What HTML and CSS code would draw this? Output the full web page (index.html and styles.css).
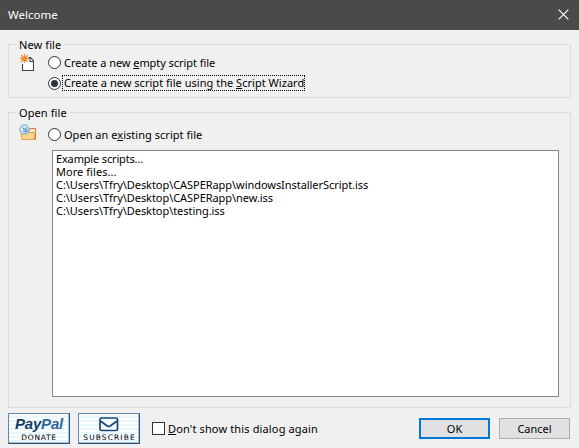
FILE: index.html
```html
<!DOCTYPE html>
<html lang="en">
<head>
<meta charset="utf-8">
<title>Welcome</title>
<link rel="stylesheet" href="styles.css">
</head>
<body>
<header class="titlebar">
  <span class="title">Welcome</span>
  <svg class="close" width="11" height="11" viewBox="0 0 11 11"><path d="M.7.7l9.6 9.6M10.3.7L.7 10.3" stroke="#fff" stroke-width="1.2" fill="none"/></svg>
</header>
<main class="content">
  <fieldset class="group group-new">
    <legend>New file</legend>
    <div class="group-body">
      <svg class="icon" width="18" height="18" viewBox="0 0 18 18">
        <path d="M9 3.500h3.500l3 3v10h-11v-7" fill="#fff"/>
        <path d="M3.500 11v6.500h11v-10l-3-3H9.500M11 4.500v4h3.500" fill="none" stroke="#444" stroke-width="1.100"/>
        <path d="M5.500 1v9M1 5.500h9M2.300 2.300l6.400 6.400M8.700 2.300L2.300 8.700" stroke="#f08a30" stroke-width="1.300"/>
      </svg>
      <div class="options">
        <label class="option"><span class="radio"></span><span class="label w-empty">Create a new <u>e</u>mpty script file</span></label>
        <label class="option"><span class="radio checked"></span><span class="label w-wizard focused">Create a new script file using the <u>S</u>cript Wizard</span></label>
      </div>
    </div>
  </fieldset>
  <fieldset class="group group-open">
    <legend>Open file</legend>
    <div class="group-body">
      <svg class="icon" width="18" height="18" viewBox="0 0 18 18">
        <path d="M3.500 7.500h6l1.500-3h5.500v11h-13z" fill="#f8ead4" stroke="#e2772e"/>
        <path d="M2 8.500h13l.5 7h-12.500z" fill="#f8d78e" stroke="#e9a052"/>
        <circle cx="5.500" cy="5.500" r="4.500" fill="#e5f2fa" stroke="#4a9dcd"/>
        <path d="M3.300 3.300l4 4M7.700 4.500v3.200H4.500M7.500 3.300L3.700 7" fill="none" stroke="#3182bc"/>
      </svg>
      <div class="options">
        <label class="option"><span class="radio"></span><span class="label w-open">Open an e<u>x</u>isting script file</span></label>
      </div>
    </div>
    <ul class="list">
      <li class="l1">Example scripts...</li>
      <li class="l2">More files...</li>
      <li>C:\Users\Tfry\Desktop\CASPERapp\windowsInstallerScript.iss</li>
      <li>C:\Users\Tfry\Desktop\CASPERapp\new.iss</li>
      <li>C:\Users\Tfry\Desktop\testing.iss</li>
    </ul>
  </fieldset>
</main>
<footer class="footer">
  <div class="badge">
    <span class="paypal">Pay<span class="pal">Pal</span></span>
    <span class="badge-text donate">DONATE</span>
  </div>
  <div class="badge">
    <svg class="mail" width="20" height="15" viewBox="0 0 20 15"><rect x="1" y="1" width="17.500" height="12.500" rx="1.500" fill="#f8fcff" stroke="#164779" stroke-width="1.700"/><path d="M1.500 4l6.700 5q1.500 1 3 0l6.800-5" fill="none" stroke="#164779" stroke-width="1.700"/></svg>
    <span class="badge-text subscribe">SUBSCRIBE</span>
  </div>
  <label class="again"><span class="checkbox"></span><span class="w-again"><u>D</u>on't show this dialog again</span></label>
  <div class="buttons">
    <button class="btn default">OK</button>
    <button class="btn cancel">Cancel</button>
  </div>
</footer>
</body>
</html>
```
FILE: styles.css
```css
* { box-sizing: border-box; }
body {
  margin: 0; width: 579px; height: 448px; overflow: hidden;
  display: flex; flex-direction: column;
  background: #f0f0f0; color: #000;
  font: 11px/13px "Noto Sans", "Open Sans", sans-serif;
}
.titlebar {
  height: 30px; flex: none; padding: 0 10px 0 8px;
  display: flex; align-items: center; justify-content: space-between;
  background: #4c4a48; color: #fff;
}
.title { font-size: 11.500px; margin-top: -2px; }
.close { margin-top: -2px; }
.content { flex: none; padding: 8px 8px 0; display: flex; flex-direction: column; gap: 8px; }
.group { margin: 0; padding: 0; border: 1px solid #dcdcdc; min-width: 0; }
.group-new { height: 60px; }
.group-open { height: 302px; }
legend { margin-left: 7px; padding: 0 3px; height: 13px; white-space: nowrap; letter-spacing: .1px; }
.group-body { display: flex; padding: 2px 0 0 10px; }
.group-open .group-body { padding-top: 5px; height: 31px; }
.icon { flex: none; margin-right: 11px; }
.options { display: flex; flex-direction: column; }
.option { height: 20px; display: flex; align-items: center; gap: 2px; }
.group-new .option:first-child { margin-top: -1px; height: 21px; padding-bottom: 1px; }
.radio {
  width: 13px; height: 13px; flex: none; border: 1px solid #333; border-radius: 50%;
  background: #fff; display: flex; align-items: center; justify-content: center;
}
.checked::after { content: ""; width: 7px; height: 7px; border-radius: 50%; background: #2b3540; }
.label { height: 15px; padding-left: 1px; line-height: 15px; white-space: nowrap; }
.w-empty { letter-spacing: -.06px; }
.w-wizard { letter-spacing: .025px; }
.w-open { letter-spacing: .03px; }
.w-again { letter-spacing: .14px; }
.focused { outline: 1px dotted #000; width: 241px; height: 14px; line-height: 14px; }
u { text-decoration: underline; text-underline-offset: 1px; text-decoration-skip-ink: none; }
.list {
  list-style: none; margin: 0 11px 0 43px; padding: 1px 3px; height: 247px;
  background: #fff; border: 1px solid #828790; white-space: nowrap;
  letter-spacing: -.055px;
}
.l1 { letter-spacing: -.16px; }
.l2 { letter-spacing: .05px; }
.footer { display: flex; padding: 5px 9px 0 8px; height: 40px; }
.badge {
  width: 62px; height: 31px; margin-right: 8px; flex: none;
  display: flex; flex-direction: column; align-items: center;
  border: 1px solid; border-color: #5f87ad #245078 #245078 #5f87ad;
  background: repeating-linear-gradient(#fff 0 2px, #e8f6fd 2px 4px);
  box-shadow: inset -1px -1px #b1bfce;
}
.paypal { font: italic 700 15px/19px "Liberation Sans", sans-serif; letter-spacing: -.2px; color: #143a66; height: 19px; }
.pal { color: #336598; }
.badge-text { font: 7.500px/8px "DejaVu Sans", sans-serif; white-space: nowrap; }
.donate { letter-spacing: .7px; margin-top: 1px; }
.subscribe { letter-spacing: 1.100px; margin-left: 1px; margin-top: 1px; }
.mail { margin: 3px 0 1px; flex: none; }
.again { display: flex; height: 31px; align-items: center; gap: 3px; margin-left: 4px; white-space: nowrap; }
.checkbox { width: 13px; height: 13px; border: 1px solid #333; background: #fff; }
.buttons { margin: 5px 0 0 auto; display: flex; gap: 9px; }
.btn { width: 71px; height: 21px; padding: 0; border: 1px solid #adadad; background: #e1e1e1; color: #000; font: inherit; }
.default { border: 2px solid #0078d7; }
```
